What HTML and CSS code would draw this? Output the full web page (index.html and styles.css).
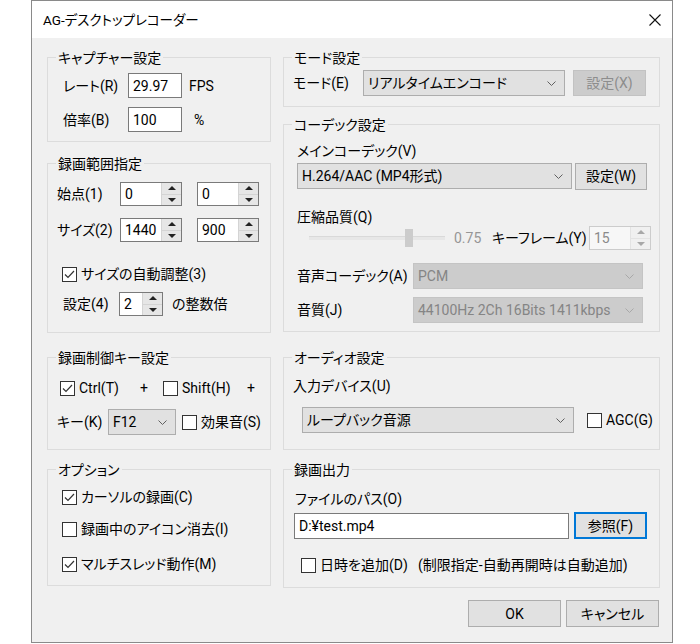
FILE: index.html
```html
<!DOCTYPE html>
<html lang="ja">
<head>
<meta charset="utf-8">
<title>AG-デスクトップレコーダー</title>
<link rel="stylesheet" href="styles.css">
</head>
<body>
<div class="window">
  <div class="titlebar">
    <span class="title">AG-デスクトップレコーダー</span>
    <svg class="close" width="12" height="12" viewBox="0 0 12 12"><path d="M0.5 0.5L11.5 11.5M11.5 0.5L0.5 11.5" stroke="#111" stroke-width="1.1" fill="none"/></svg>
  </div>
  <div class="client">
    <div class="col col-left">
      <section class="group g-capture">
        <div class="gtitle">キャプチャー設定</div>
        <div class="row r1"><span class="lbl">レート(R)</span><span class="edit">29.97</span><span class="unit">FPS</span></div>
        <div class="row r2"><span class="lbl">倍率(B)</span><span class="edit">100</span><span class="unit pct">%</span></div>
      </section>

      <section class="group g-range">
        <div class="gtitle">録画範囲指定</div>
        <div class="row r1"><span class="lbl">始点(1)</span>
          <span class="spin"><span class="sv">0</span><span class="ud"><span class="up"></span><span class="dn"></span></span></span>
          <span class="spin"><span class="sv">0</span><span class="ud"><span class="up"></span><span class="dn"></span></span></span>
        </div>
        <div class="row r2"><span class="lbl">サイズ(2)</span>
          <span class="spin"><span class="sv">1440</span><span class="ud"><span class="up"></span><span class="dn"></span></span></span>
          <span class="spin"><span class="sv">900</span><span class="ud"><span class="up"></span><span class="dn"></span></span></span>
        </div>
        <div class="row r3"><span class="ck"><span class="box"><svg width="13" height="13" viewBox="0 0 13 13"><path d="M2 6.5L5 9.5L11 3" stroke="#333" stroke-width="1.2" fill="none"/></svg></span>サイズの自動調整(3)</span></div>
        <div class="row r4"><span class="lbl">設定(4)</span>
          <span class="spin"><span class="sv">2</span><span class="ud"><span class="up"></span><span class="dn"></span></span></span>
          <span class="after">の整数倍</span>
        </div>
      </section>

      <section class="group g-keys">
        <div class="gtitle">録画制御キー設定</div>
        <div class="row r1">
          <span class="ck ctrl"><span class="box"><svg width="13" height="13" viewBox="0 0 13 13"><path d="M2 6.5L5 9.5L11 3" stroke="#333" stroke-width="1.2" fill="none"/></svg></span>Ctrl(T)</span>
          <span class="plus">+</span>
          <span class="ck shift"><span class="box"></span>Shift(H)</span>
          <span class="plus">+</span>
        </div>
        <div class="row r2">
          <span class="lbl">キー(K)</span>
          <span class="combo"><span>F12</span><svg class="chev" width="9" height="5" viewBox="0 0 9 5"><path d="M0.5 0.5L4.5 4.5L8.5 0.5" stroke="#606060" fill="none"/></svg></span>
          <span class="ck sound"><span class="box"></span>効果音(S)</span>
        </div>
      </section>

      <section class="group g-opts">
        <div class="gtitle">オプション</div>
        <div class="row r1"><span class="ck"><span class="box"><svg width="13" height="13" viewBox="0 0 13 13"><path d="M2 6.5L5 9.5L11 3" stroke="#333" stroke-width="1.2" fill="none"/></svg></span>カーソルの録画(C)</span></div>
        <div class="row r2"><span class="ck"><span class="box"></span>録画中のアイコン消去(I)</span></div>
        <div class="row r3"><span class="ck"><span class="box"><svg width="13" height="13" viewBox="0 0 13 13"><path d="M2 6.5L5 9.5L11 3" stroke="#333" stroke-width="1.2" fill="none"/></svg></span>マルチスレッド動作(M)</span></div>
      </section>
    </div>

    <div class="col col-right">
      <section class="group g-mode">
        <div class="gtitle">モード設定</div>
        <div class="row r1">
          <span class="lbl">モード(E)</span>
          <span class="combo"><span>リアルタイムエンコード</span><svg class="chev" width="9" height="5" viewBox="0 0 9 5"><path d="M0.5 0.5L4.5 4.5L8.5 0.5" stroke="#606060" fill="none"/></svg></span>
          <span class="btn disabled">設定(X)</span>
        </div>
      </section>

      <section class="group g-codec">
        <div class="gtitle">コーデック設定</div>
        <div class="row r1"><span class="lbl">メインコーデック(V)</span></div>
        <div class="row r2">
          <span class="combo"><span>H.264/AAC (MP4形式)</span><svg class="chev" width="9" height="5" viewBox="0 0 9 5"><path d="M0.5 0.5L4.5 4.5L8.5 0.5" stroke="#606060" fill="none"/></svg></span>
          <span class="btn">設定(W)</span>
        </div>
        <div class="row r3"><span class="lbl">圧縮品質(Q)</span></div>
        <div class="row r4">
          <span class="slider"><span class="thumb"></span></span>
          <span class="val">0.75</span>
          <span class="kf">キーフレーム(Y)</span>
          <span class="spin off"><span class="sv">15</span><span class="ud"><span class="up"></span><span class="dn"></span></span></span>
        </div>
        <div class="row r5">
          <span class="lbl">音声コーデック(A)</span>
          <span class="combo off"><span>PCM</span><svg class="chev" width="9" height="5" viewBox="0 0 9 5"><path d="M0.5 0.5L4.5 4.5L8.5 0.5" stroke="#a8a8a8" fill="none"/></svg></span>
        </div>
        <div class="row r6">
          <span class="lbl">音質(J)</span>
          <span class="combo off"><span>44100Hz 2Ch 16Bits 1411kbps</span><svg class="chev" width="9" height="5" viewBox="0 0 9 5"><path d="M0.5 0.5L4.5 4.5L8.5 0.5" stroke="#a8a8a8" fill="none"/></svg></span>
        </div>
      </section>

      <section class="group g-audio">
        <div class="gtitle">オーディオ設定</div>
        <div class="row r1"><span class="lbl">入力デバイス(U)</span></div>
        <div class="row r2">
          <span class="combo"><span>ループバック音源</span><svg class="chev" width="9" height="5" viewBox="0 0 9 5"><path d="M0.5 0.5L4.5 4.5L8.5 0.5" stroke="#606060" fill="none"/></svg></span>
          <span class="ck agc"><span class="box"></span>AGC(G)</span>
        </div>
      </section>

      <section class="group g-output">
        <div class="gtitle">録画出力</div>
        <div class="row r1"><span class="lbl">ファイルのパス(O)</span></div>
        <div class="row r2">
          <span class="edit path">D:¥test.mp4</span>
          <span class="btn default">参照(F)</span>
        </div>
        <div class="row r3">
          <span class="ck date"><span class="box"></span>日時を追加(D)</span>
          <span class="note">(制限指定-自動再開時は自動追加)</span>
        </div>
      </section>

      <div class="buttons">
        <span class="btn">OK</span>
        <span class="btn">キャンセル</span>
      </div>
    </div>
  </div>
</div>
</body>
</html>
```

FILE: styles.css
```css
html, body {
  margin: 0;
  padding: 0;
  background: #ffffff;
}

body {
  font-family: Roboto, "Noto Sans CJK JP", sans-serif;
  font-size: 14px;
  font-weight: 400;
  line-height: 18px;
  color: #000;
  font-feature-settings: "palt";
}

.window {
  margin-left: 31px;
  width: 642px;
  height: 643px;
  box-sizing: border-box;
  border: 1px solid #8a8a8a;
  background: #f0f0f0;
  display: flex;
  flex-direction: column;
}

.titlebar {
  height: 37px;
  flex: none;
  background: #fff;
  display: flex;
  align-items: center;
  justify-content: space-between;
  padding: 0 11px;
}

.title {
  font-size: 13.5px;
}

.client {
  flex: 1;
  display: flex;
  gap: 12px;
  padding: 0 12px 0 15px;
}

.col { display: flex; flex-direction: column; }
.col-left { width: 224px; }
.col-right { width: 377px; }

.group {
  box-sizing: border-box;
  border: 1px solid #dcdcdc;
  flex: none;
}

.gtitle {
  width: fit-content;
  height: 18px;
  margin: -9px 0 0 8px;
  padding: 0 2px;
  background: #f0f0f0;
  white-space: nowrap;
}

.row {
  display: flex;
  align-items: center;
  white-space: nowrap;
}

.lbl { flex: none; }

/* edit box */
.edit {
  box-sizing: border-box;
  height: 25px;
  border: 1px solid #7a7a7a;
  background: #fff;
  padding-left: 4px;
  display: flex;
  align-items: center;
  flex: none;
}

/* spin control */
.spin {
  box-sizing: border-box;
  height: 24px;
  border: 1px solid #7a7a7a;
  background: #fff;
  display: flex;
  flex: none;
}
.spin .sv {
  flex: 1;
  padding-left: 4px;
  display: flex;
  align-items: center;
}
.spin .ud {
  width: 19px;
  display: flex;
  flex-direction: column;
  background: #e6e6e6;
  border-left: 1px solid #d4d4d4;
}
.spin .ud span {
  flex: 1;
  display: flex;
  align-items: center;
  justify-content: center;
}
.spin .ud .up { border-bottom: 1px solid #d4d4d4; }
.spin .ud .up::before {
  content: "";
  border-left: 4px solid transparent;
  border-right: 4px solid transparent;
  border-bottom: 4px solid #222;
}
.spin .ud .dn::before {
  content: "";
  border-left: 4px solid transparent;
  border-right: 4px solid transparent;
  border-top: 4px solid #222;
}
.spin.off {
  border-color: #cccccc;
  background: #f7f7f7;
  color: #8a8a8a;
}
.spin.off .ud { background: #f0f0f0; border-left-color: #e3e3e3; }
.spin.off .ud .up { border-bottom-color: #e3e3e3; }
.spin.off .ud .up::before { border-bottom-color: #a8a8a8; }
.spin.off .ud .dn::before { border-top-color: #a8a8a8; }

/* combobox */
.combo {
  box-sizing: border-box;
  height: 26px;
  border: 1px solid #adadad;
  background: #e1e1e1;
  display: flex;
  align-items: center;
  justify-content: space-between;
  padding: 0 8px 0 4px;
  flex: none;
}
.combo.off {
  background: #cccccc;
  border-color: #c4c4c4;
  color: #858585;
}

/* checkbox */
.ck {
  display: flex;
  align-items: center;
  gap: 4px;
  flex: none;
}
.box {
  width: 15px;
  height: 15px;
  box-sizing: border-box;
  border: 1px solid #333;
  background: #fff;
  display: flex;
  align-items: center;
  justify-content: center;
  flex: none;
}

/* buttons */
.btn {
  box-sizing: border-box;
  height: 26px;
  border: 1px solid #adadad;
  background: #e1e1e1;
  display: flex;
  align-items: center;
  justify-content: center;
  flex: none;
}
.btn.disabled {
  background: #cccccc;
  border-color: #c2c2c2;
  color: #8d8d8d;
}
.btn.default {
  border-color: #0078d7;
  box-shadow: inset 0 0 0 1px #0078d7;
}

/* capture group */
.g-capture { margin-top: 19px; height: 85px; }
.g-capture .row { height: 25px; padding-left: 15px; }
.g-capture .r1 { margin-top: 6px; }
.g-capture .r2 { margin-top: 9px; }
.g-capture .lbl { width: 65px; }
.g-capture .edit { width: 54px; }
.unit { margin-left: 7px; }
.unit.pct { margin-left: 12px; }

/* range group */
.g-range { margin-top: 21px; height: 170px; }
.g-range .r1 { margin-top: 9px; height: 24px; padding-left: 9px; }
.g-range .r2 { margin-top: 12px; height: 24px; padding-left: 9px; }
.g-range .r1 .lbl, .g-range .r2 .lbl { width: 63px; }
.g-range .r1 .spin, .g-range .r2 .spin { width: 62px; }
.g-range .spin + .spin { margin-left: 15px; }
.g-range .r3 { margin-top: 23px; height: 18px; padding-left: 14px; }
.g-range .r4 { margin-top: 9px; height: 24px; padding-left: 15px; }
.g-range .r4 .lbl { width: 56px; }
.g-range .r4 .spin { width: 44px; }
.g-range .after { margin-left: 9px; }

/* key group */
.g-keys { margin-top: 24px; height: 93px; }
.g-keys .r1 { margin-top: 9px; height: 24px; padding-left: 12px; }
.g-keys .ctrl { width: 80px; }
.g-keys .plus { width: 26px; }
.g-keys .shift { width: 84px; }
.g-keys .r2 { margin-top: 9px; height: 26px; padding-left: 9px; }
.g-keys .r2 .lbl { width: 51px; }
.g-keys .combo { width: 68px; }
.g-keys .sound { margin-left: 6px; }

/* options group */
.g-opts { margin-top: 19px; height: 117px; }
.g-opts .row { height: 18px; padding-left: 14px; }
.g-opts .r1 { margin-top: 9px; }
.g-opts .r2 { margin-top: 14px; }
.g-opts .r3 { margin-top: 17px; }

/* mode group */
.g-mode { margin-top: 19px; height: 50px; }
.g-mode .r1 { margin-top: 3px; height: 26px; padding-left: 9px; }
.g-mode .lbl { width: 70px; }
.g-mode .combo { width: 202px; }
.g-mode .btn { margin-left: 8px; width: 73px; }

/* codec group */
.g-codec { margin-top: 17px; height: 208px; }
.g-codec .r1 { margin-top: 8px; height: 18px; padding-left: 13px; }
.g-codec .r2 { margin-top: 3px; height: 26px; padding-left: 13px; }
.g-codec .r2 .combo { width: 275px; }
.g-codec .r2 .btn { margin-left: 3px; width: 72px; height: 27px; }
.g-codec .r3 { margin-top: 19px; height: 18px; padding-left: 13px; }
.g-codec .r4 { margin-top: 0; height: 24px; padding-left: 25px; }
.slider {
  width: 136px;
  height: 24px;
  display: flex;
  align-items: center;
  flex: none;
  background: linear-gradient(#d9d9d9, #d9d9d9) 0 10px / 100% 1px no-repeat,
              linear-gradient(#e7e7e7, #e7e7e7) 0 11px / 100% 3px no-repeat;
}
.thumb {
  margin-left: 96px;
  width: 8px;
  height: 18px;
  background: #cccccc;
}
.val { margin-left: 9px; width: 38px; color: #969696; }
.kf { width: 97px; }
.g-codec .r4 .spin { width: 62px; }
.g-codec .r5 { margin-top: 13px; height: 26px; padding-left: 13px; }
.g-codec .r6 { margin-top: 8px; height: 26px; padding-left: 13px; }
.g-codec .r5 .lbl, .g-codec .r6 .lbl { width: 116px; }
.g-codec .r5 .combo, .g-codec .r6 .combo { width: 230px; }

/* audio group */
.g-audio { margin-top: 25px; height: 93px; }
.g-audio .r1 { margin-top: 10px; height: 18px; padding-left: 9px; }
.g-audio .r2 { margin-top: 12px; height: 26px; padding-left: 18px; }
.g-audio .combo { width: 272px; }
.g-audio .agc { margin-left: 13px; }

/* output group */
.g-output { margin-top: 19px; height: 119px; }
.g-output .r1 { margin-top: 11px; height: 18px; padding-left: 11px; }
.g-output .r2 { margin-top: 4px; height: 27px; padding-left: 10px; }
.g-output .path { width: 275px; height: 26px; }
.g-output .r2 .btn { margin-left: 5px; width: 73px; height: 27px; }
.g-output .r3 { margin-top: 17px; height: 18px; padding-left: 17px; }
.g-output .date { width: 117px; }

/* dialog buttons */
.buttons {
  margin-top: 12px;
  display: flex;
  justify-content: flex-end;
  gap: 5px;
  padding-right: 1px;
}
.buttons .btn { width: 93px; height: 27px; }
```
